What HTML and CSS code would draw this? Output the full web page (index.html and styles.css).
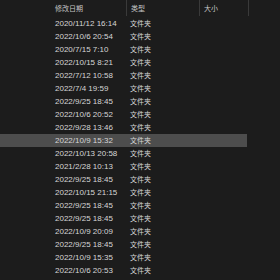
FILE: index.html
```html
<!DOCTYPE html>
<html>
<head>
<meta charset="utf-8">
<link rel="stylesheet" href="styles.css">
</head>
<body>
<div class="list">
  <div class="header">
    <div class="hcell c-date">修改日期</div>
    <div class="hcell c-type">类型</div>
    <div class="hcell c-size">大小</div>
  </div>
  <div class="row"><span class="d">2020/11/12 16:14</span><span class="t">文件夹</span></div>
  <div class="row"><span class="d">2022/10/6 20:54</span><span class="t">文件夹</span></div>
  <div class="row"><span class="d">2020/7/15 7:10</span><span class="t">文件夹</span></div>
  <div class="row"><span class="d">2022/10/15 8:21</span><span class="t">文件夹</span></div>
  <div class="row"><span class="d">2022/7/12 10:58</span><span class="t">文件夹</span></div>
  <div class="row"><span class="d">2022/7/4 19:59</span><span class="t">文件夹</span></div>
  <div class="row"><span class="d">2022/9/25 18:45</span><span class="t">文件夹</span></div>
  <div class="row"><span class="d">2022/10/6 20:52</span><span class="t">文件夹</span></div>
  <div class="row"><span class="d">2022/9/28 13:46</span><span class="t">文件夹</span></div>
  <div class="row selected"><span class="d">2022/10/9 15:32</span><span class="t">文件夹</span></div>
  <div class="row"><span class="d">2022/10/13 20:58</span><span class="t">文件夹</span></div>
  <div class="row"><span class="d">2021/2/28 10:13</span><span class="t">文件夹</span></div>
  <div class="row"><span class="d">2022/9/25 18:45</span><span class="t">文件夹</span></div>
  <div class="row"><span class="d">2022/10/15 21:15</span><span class="t">文件夹</span></div>
  <div class="row"><span class="d">2022/9/25 18:45</span><span class="t">文件夹</span></div>
  <div class="row"><span class="d">2022/9/25 18:45</span><span class="t">文件夹</span></div>
  <div class="row"><span class="d">2022/10/9 20:09</span><span class="t">文件夹</span></div>
  <div class="row"><span class="d">2022/9/25 18:45</span><span class="t">文件夹</span></div>
  <div class="row"><span class="d">2022/10/9 15:35</span><span class="t">文件夹</span></div>
  <div class="row"><span class="d">2022/10/6 20:53</span><span class="t">文件夹</span></div>
</div>
</body>
</html>
```
FILE: styles.css
```css
html, body {
  margin: 0;
  padding: 0;
  background: #1c1c1c;
  width: 280px;
  height: 280px;
  overflow: hidden;
}
.list {
  font-family: "Liberation Sans", "Noto Sans CJK SC", sans-serif;
  font-size: 8px;
  line-height: 13px;
  color: #d6d6d6;
}
.header {
  display: grid;
  grid-template-columns: 126px 73px 50px;
  height: 17px;
  color: #c4c4c4;
  font-size: 7px;
}
.hcell {
  display: flex;
  align-items: center;
  height: 16px;
  padding-left: 4px;
}
.c-date {
  padding-left: 55px;
}
.c-type, .c-size {
  border-left: 1px solid #3a3a3a;
}
.c-size {
  border-right: 1px solid #3a3a3a;
  padding-left: 4px;
}
.row {
  display: grid;
  grid-template-columns: 130px 117px;
  height: 13px;
  align-items: center;
  width: 247px;
}
.row .d {
  padding-left: 55px;
}
.row .t {
  font-size: 7px;
}
.row.selected {
  background: #4d4d4d;
}
```
